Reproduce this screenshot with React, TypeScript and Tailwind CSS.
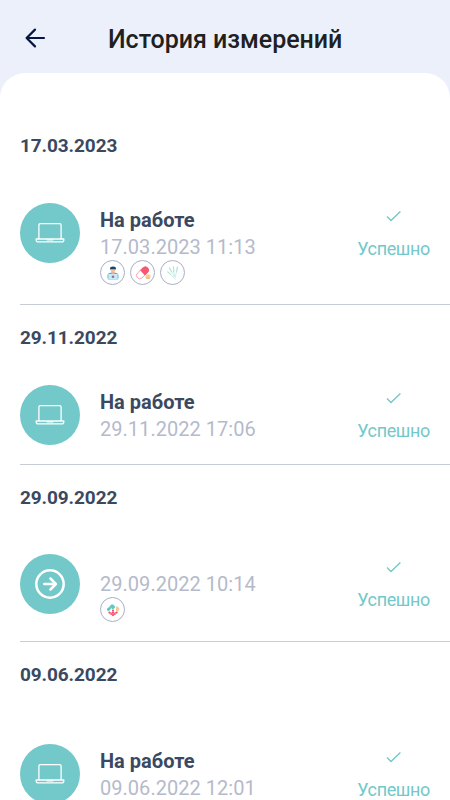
import type { ReactNode } from "react";

type Tag = "doctor" | "pills" | "needles" | "molecule";

type Measurement = {
  date: string;
  time: string;
  title?: string;
  tags: Tag[];
  headingClass: string;
  rowClass: string;
};

const MEASUREMENTS: Measurement[] = [
  {
    date: "17.03.2023",
    time: "11:13",
    title: "На работе",
    tags: ["doctor", "pills", "needles"],
    headingClass: "pt-[61px] pb-[45px]",
    rowClass: "h-[101px]",
  },
  {
    date: "29.11.2022",
    time: "17:06",
    title: "На работе",
    tags: [],
    headingClass: "pt-[21px] pb-[35px]",
    rowClass: "h-[79px]",
  },
  {
    date: "29.09.2022",
    time: "10:14",
    tags: ["molecule"],
    headingClass: "pt-[21px] pb-11",
    rowClass: "h-[87px]",
  },
  {
    date: "09.06.2022",
    time: "12:01",
    title: "На работе",
    tags: [],
    headingClass: "pt-[21px] pb-[57px]",
    rowClass: "h-20",
  },
];

const TAG_ICONS: Record<Tag, ReactNode> = {
  doctor: (
    <>
      <path d="M.6 13V9.2Q.8 7 3.5 6.7h6q2.7.3 2.9 2.5V13z" fill="#4fb9b4" />
      <path d="M4.7 6h3.6v1.6L6.5 8.8 4.7 7.6z" fill="#f2a883" />
      <circle cx="6.5" cy="4.2" r="2.3" fill="#f8bd9a" />
      <path d="M3.4 3.7V1.2q3.1-2.4 6.2 0v2.5L8.8 3H4.2z" fill="#17466b" />
      <path d="M1.3 8.1h10.4L11.2 14H1.8z" fill="#c9e8fb" />
      <circle cx="6.5" cy="11" r="1.4" fill="#8e7887" />
      <path d="M.8 14h11.4" stroke="#acd8f0" strokeWidth=".8" />
    </>
  ),
  pills: (
    <>
      <g transform="rotate(-43 6 6.8)">
        <rect x="-1.6" y="3.3" width="15.2" height="7" rx="3.5" fill="#fff" stroke="#f37a8b" strokeWidth=".7" />
        <path d="M6 3h4.1a3.8 3.8 0 0 1 0 7.6H6z" fill="#f85770" />
      </g>
      <ellipse cx="12" cy="10.4" rx="2.6" ry="2.1" fill="#fac78e" />
      <ellipse cx="11.8" cy="12" rx="2.6" ry="1.5" fill="#f5b77b" />
      <path d="M9.5 11h5" stroke="#fff0df" strokeWidth=".5" />
    </>
  ),
  needles: (
    <>
      <path d="M2.6 1.2 8 11M6.8 0l1.5 11.5M11.4.2 9 11.5M.6 5.5l9 8.3" stroke="#b5e5e0" strokeWidth=".7" fill="none" />
      <path d="m2.6 1.2 2.5 5M6.8 0l.7 6M11.4.2l-1.2 6M.6 5.5l3.6 3.3" stroke="#b0e4df" strokeWidth="1.2" fill="none" />
    </>
  ),
  molecule: (
    <>
      <path d="M1.6 6.4 3 5.1M4.2 3.8 5.6 2.5M6.3 4.4l.8-.7" stroke="#65c5c2" strokeWidth="3.2" strokeLinecap="round" />
      <path d="M2.4 3.1 4.6 5.8" stroke="#c5e9e5" strokeWidth=".5" />
      <path d="M9.7 3.2h1.8l1.5 1.9v2.3l-1.5 1.3-1.8-1z" fill="#f7c79b" />
      <path d="M6.5 7v5.5M2.2 9.8h8.6" stroke="#f48497" strokeWidth=".7" />
      <g fill="#f04f6b">
        <circle cx="6.5" cy="7.6" r="1.2" />
        <circle cx="6.5" cy="10" r="1.2" />
        <circle cx="2.7" cy="9.7" r="1.2" />
        <circle cx="10.3" cy="9.7" r="1.2" />
        <circle cx="4.5" cy="11.3" r="1.1" />
        <circle cx="8.5" cy="11.3" r="1.1" />
        <circle cx="6.5" cy="12.4" r="1.2" />
      </g>
    </>
  ),
};

function TagBadge({ tag }: { tag: Tag }) {
  return (
    <span className="flex size-[25px] items-center justify-center rounded-full border border-[#a9b0c5] bg-white">
      <svg width="14" height="14" viewBox="-1 -.5 15 15" className="overflow-visible">
        {TAG_ICONS[tag]}
      </svg>
    </span>
  );
}

function LaptopIcon() {
  return (
    <svg width="30" height="22" viewBox="0 0 30 22" fill="none" stroke="white">
      <path d="M3.9 17V3.2Q3.9 1.7 5.4 1.7h19.2q1.5 0 1.5 1.5V17" strokeWidth="1.3" />
      <path d="M1.2 17h27.6v1q0 1.9-2 1.9H3.2q-2 0-2-1.9z" strokeWidth="1.3" strokeLinejoin="round" />
      <path d="M11.7 18h6.6" strokeWidth="1" />
    </svg>
  );
}

function ArrowCircleIcon() {
  return (
    <svg width="30" height="30" viewBox="0 0 30 30" fill="none" stroke="white" strokeWidth="2.5">
      <circle cx="15" cy="15" r="13.7" />
      <path d="M9.2 15h11.2M15.4 9.5l5.5 5.5-5.5 5.5" strokeLinecap="round" strokeLinejoin="round" />
    </svg>
  );
}

function MeasurementRow({ item }: { item: Measurement }) {
  return (
    <div className={`box-content flex items-start border-b border-[#c8ccd7] ${item.rowClass}`}>
      <div className="flex size-[60px] shrink-0 items-center justify-center rounded-full bg-[#73c8c9]">
        {item.title ? <LaptopIcon /> : <ArrowCircleIcon />}
      </div>

      <div className={`ml-5 flex-1 ${item.title ? "pt-[3px]" : "pt-[17px]"}`}>
        {item.title ? (
          <div className="text-[20px] leading-7 font-bold text-[#3a4961]">{item.title}</div>
        ) : null}
        <div className="text-[20px] leading-[26px] tracking-[0.03px] text-[#b5bacb]">
          {item.date} {item.time}
        </div>
        <div className="flex gap-[5px]">
          {item.tags.map((tag) => (
            <TagBadge key={tag} tag={tag} />
          ))}
        </div>
      </div>

      <div className="mr-5 flex flex-col items-center pt-[7px] text-[#73c8c9]">
        <svg width="16" height="13" viewBox="0 0 16 13" fill="none" stroke="currentColor" strokeWidth="1.4">
          <path d="m1 6.6 4 4 9.4-9" />
        </svg>
        <span className="mt-[14px] text-[18px] leading-6 tracking-[-0.36px]">Успешно</span>
      </div>
    </div>
  );
}

export default function App() {
  return (
    <main className="h-[800px] w-full overflow-hidden bg-[#ecf0fa] font-[Roboto,sans-serif]">
      <header className="flex h-[73px] items-center pt-[5px] pl-6">
        <button type="button" aria-label="Назад" className="text-[#07163f]">
          <svg width="22" height="22" viewBox="0 0 22 22" fill="none" stroke="currentColor" strokeWidth="2.2">
            <path d="M20 10H2.8M11 1.6 2.6 10l8.4 8.4" strokeLinecap="round" strokeLinejoin="round" />
          </svg>
        </button>
        <h1 className="ml-[62px] pt-px text-[25px] leading-8 font-medium tracking-[-0.03px] text-[#202020]">
          История измерений
        </h1>
      </header>

      <div className="flex h-[727px] flex-col overflow-hidden rounded-t-[25px] bg-white pl-5">
        {MEASUREMENTS.map((item) => (
          <section key={item.date} className="shrink-0">
            <h2 className={`text-[19px] leading-6 font-bold tracking-[-0.1px] text-[#3a4961] ${item.headingClass}`}>
              {item.date}
            </h2>
            <MeasurementRow item={item} />
          </section>
        ))}
      </div>
    </main>
  );
}
